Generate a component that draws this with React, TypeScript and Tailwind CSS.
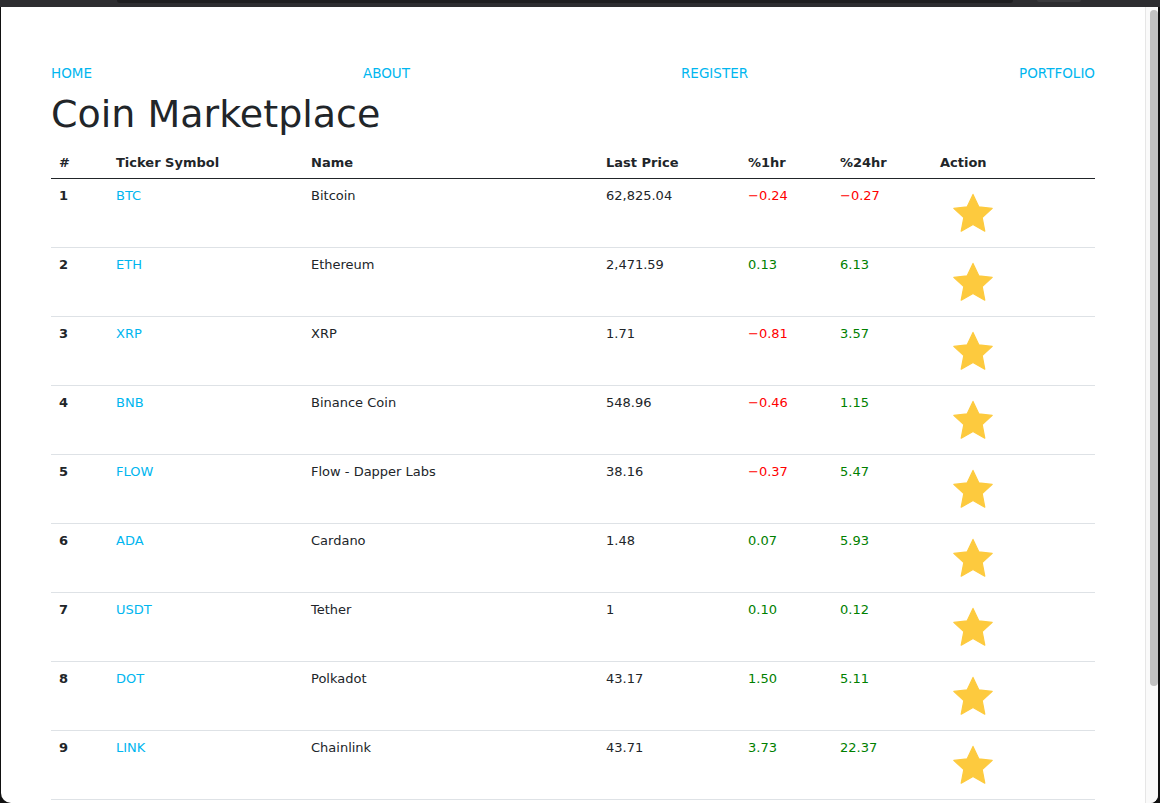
import React from "react";

type Coin = { sym: string; name: string; price: string; h1: string; h24: string };

const coins: Coin[] = [
  { sym: "BTC", name: "Bitcoin", price: "62,825.04", h1: "-0.24", h24: "-0.27" },
  { sym: "ETH", name: "Ethereum", price: "2,471.59", h1: "0.13", h24: "6.13" },
  { sym: "XRP", name: "XRP", price: "1.71", h1: "-0.81", h24: "3.57" },
  { sym: "BNB", name: "Binance Coin", price: "548.96", h1: "-0.46", h24: "1.15" },
  { sym: "FLOW", name: "Flow - Dapper Labs", price: "38.16", h1: "-0.37", h24: "5.47" },
  { sym: "ADA", name: "Cardano", price: "1.48", h1: "0.07", h24: "5.93" },
  { sym: "USDT", name: "Tether", price: "1", h1: "0.10", h24: "0.12" },
  { sym: "DOT", name: "Polkadot", price: "43.17", h1: "1.50", h24: "5.11" },
  { sym: "LINK", name: "Chainlink", price: "43.71", h1: "3.73", h24: "22.37" },
];

function Pct({ v }: { v: string }) {
  const neg = v.startsWith("-");
  return (
    <span className={neg ? "text-[#ff0000]" : "text-[#008000]"}>
      {neg ? "\u2212" + v.slice(1) : v}
    </span>
  );
}

function Star() {
  return (
    <svg width="48" height="48" viewBox="0 0 24 24">
      <polygon
        points="12,2.2 14.9,8.4 21.6,9.2 16.6,13.8 17.9,20.6 12,17.3 6.1,20.6 7.4,13.8 2.4,9.2 9.1,8.4"
        fill="#fdca3e"
        stroke="#fdca3e"
        strokeWidth="0.6"
        strokeLinejoin="round"
      />
    </svg>
  );
}

export default function App() {
  const font = { fontFamily: '"DejaVu Sans", Verdana, sans-serif' };
  return (
    <div className="w-[1160px] h-[803px] bg-[#111] flex flex-col overflow-hidden" style={font}>
      <div className="h-[7px] bg-[#2d2d30] relative shrink-0">
        <div className="absolute left-[117px] w-[896px] top-0 h-[3px] bg-[#1e1e20] rounded-b-[4px]" />
        <div className="absolute left-[1037px] w-[44px] top-0 h-[2px] bg-[#3a3a3d] rounded-b-[3px]" />
      </div>
      <div className="flex-1 flex ml-[1px] mr-[2px] bg-white rounded-bl-[10px] rounded-br-[8px] overflow-hidden">
        <div className="flex-1 px-[50px] pt-[56px] text-[#212529]">
          <nav className="flex justify-between text-[13.5px] leading-[20px] text-[#00b6ef]">
            <a>HOME</a>
            <a>ABOUT</a>
            <a>REGISTER</a>
            <a>PORTFOLIO</a>
          </nav>
          <h1 className="text-[38px] leading-[46px] mt-[8px] mb-[8px] font-normal text-[#212529]">
            Coin Marketplace
          </h1>
          <table className="w-full table-fixed border-collapse text-[13px] leading-[20px]">
            <colgroup>
              <col className="w-[57px]" />
              <col className="w-[195px]" />
              <col className="w-[295px]" />
              <col className="w-[142px]" />
              <col className="w-[92px]" />
              <col className="w-[100px]" />
              <col className="w-[163px]" />
            </colgroup>
            <thead>
              <tr className="border-b border-[#212529]">
                {["#", "Ticker Symbol", "Name", "Last Price", "%1hr", "%24hr", "Action"].map((h) => (
                  <th key={h} className="text-left font-bold px-2 pt-[8px] pb-[5px] align-bottom">
                    {h}
                  </th>
                ))}
              </tr>
            </thead>
            <tbody>
              {coins.map((c, i) => (
                <tr key={c.sym} className="border-b border-[#dee2e6]">
                  <td className="px-2 pt-[7px] pb-[8px] align-top font-bold">{i + 1}</td>
                  <td className="px-2 pt-[7px] pb-[8px] align-top text-[#00b6ef]">{c.sym}</td>
                  <td className="px-2 pt-[7px] pb-[8px] align-top">{c.name}</td>
                  <td className="px-2 pt-[7px] pb-[8px] align-top">{c.price}</td>
                  <td className="px-2 pt-[7px] pb-[8px] align-top">
                    <Pct v={c.h1} />
                  </td>
                  <td className="px-2 pt-[7px] pb-[8px] align-top">
                    <Pct v={c.h24} />
                  </td>
                  <td className="px-2 pt-[7px] pb-[8px] align-top">
                    <div className="h-[53px] pt-[4px] pl-[9px] overflow-hidden">
                      <Star />
                    </div>
                  </td>
                </tr>
              ))}
            </tbody>
          </table>
        </div>
        <div className="w-[14px] shrink-0 bg-[#fafafa] border-l border-[#e6e6e6] pt-[3px] pl-[4px]">
          <div className="w-[8px] h-[676px] rounded-full bg-[#c1c1c1]" />
        </div>
      </div>
    </div>
  );
}
